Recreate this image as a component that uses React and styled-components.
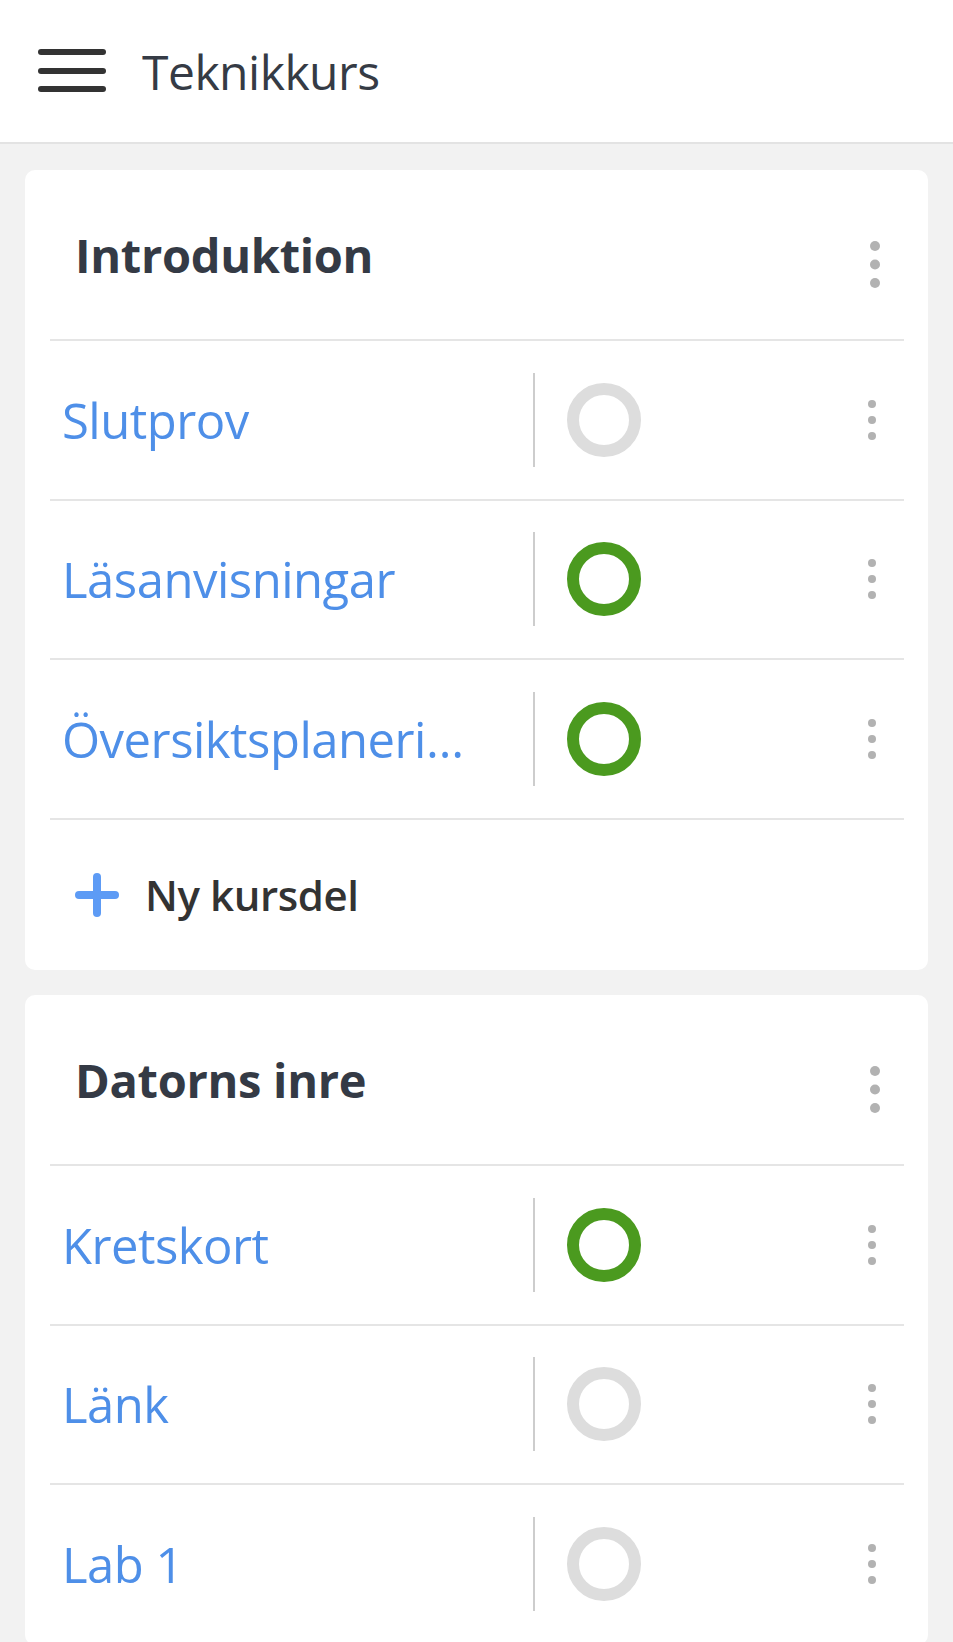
import React from "react";
import styled, { createGlobalStyle } from "styled-components";

const GlobalStyle = createGlobalStyle`
  html, body {
    margin: 0;
    padding: 0;
    background: #f2f2f2;
    font-family: "Open Sans", "Noto Sans", "Liberation Sans", sans-serif;
  }
  * { box-sizing: border-box; }
`;

const TopBar = styled.header`
  height: 144px;
  background: #ffffff;
  border-bottom: 2px solid #e3e3e3;
  display: flex;
  align-items: center;
  padding-left: 37px;
  gap: 35px;
`;

const MenuButton = styled.button`
  border: 0;
  background: none;
  padding: 0;
  display: flex;
  color: #333333;
`;

const Title = styled.h1`
  margin: 0;
  font-size: 48px;
  font-weight: 400;
  color: #353b45;
  letter-spacing: -0.5px;
`;

const Main = styled.main`
  padding: 26px 25px 0;
  display: flex;
  flex-direction: column;
  gap: 25px;
`;

const Card = styled.section`
  background: #ffffff;
  border-radius: 10px;
  padding: 0 24px 0 25px;
`;

const CardHeader = styled.div`
  height: 171px;
  border-bottom: 2px solid #e5e5e5;
  display: flex;
  align-items: center;
  justify-content: space-between;
  padding: 0 24px 0 25px;
`;

const Heading = styled.h2`
  margin: 0;
  font-size: 47px;
  font-weight: 700;
  color: #343a45;
  letter-spacing: -0.3px;
`;

const Row = styled.div`
  height: 159.5px;
  border-bottom: 2px solid #e5e5e5;
  display: grid;
  grid-template-columns: 483px 2px 1fr auto;
  align-items: center;
  padding-right: 28px;
`;

const ItemLink = styled.a`
  padding-left: 12px;
  padding-right: 60px;
  font-size: 49px;
  color: #4e8fe8;
  text-decoration: none;
  white-space: nowrap;
  overflow: hidden;
  text-overflow: ellipsis;
  letter-spacing: -0.5px;
`;

const Separator = styled.div`
  width: 2px;
  height: 94px;
  background: #cdcdcd;
`;

const StatusCell = styled.div`
  padding-left: 32px;
  display: flex;
  align-items: center;
`;

const StatusRing = styled.div`
  width: 74px;
  height: 74px;
  border-radius: 50%;
  border: 12px solid ${(p) => (p.$done ? "#4b9a1f" : "#dddddd")};
`;

const KebabButton = styled.button`
  border: 0;
  background: none;
  padding: 0;
  display: flex;
  color: #b2b2b2;
  margin-top: ${(p) => (p.$big ? "19px" : "0")};
`;

const AddRow = styled.div`
  height: 150.5px;
  display: flex;
  align-items: center;
  padding-left: 25px;
  gap: 26px;
`;

const AddLabel = styled.span`
  font-size: 42px;
  font-weight: 600;
  color: #333333;
  letter-spacing: -0.4px;
`;

function Kebab({ big }) {
  const r = big ? 5 : 4;
  const step = big ? 18.5 : 16;
  const h = step * 2 + r * 2;
  return (
    <KebabButton $big={big} aria-label="Mer">
      <svg width={r * 2} height={h} viewBox={`0 0 ${r * 2} ${h}`}>
        {[0, 1, 2].map((i) => (
          <circle key={i} cx={r} cy={r + i * step} r={r} fill="currentColor" />
        ))}
      </svg>
    </KebabButton>
  );
}

function MenuIcon() {
  return (
    <svg width="70" height="46" viewBox="0 0 70 46">
      <g stroke="currentColor" strokeWidth="6" strokeLinecap="round">
        <line x1="4" y1="4" x2="66" y2="4" />
        <line x1="4" y1="23" x2="66" y2="23" />
        <line x1="4" y1="41" x2="66" y2="41" />
      </g>
    </svg>
  );
}

function PlusIcon() {
  return (
    <svg width="44" height="44" viewBox="0 0 44 44">
      <g stroke="#5d9bf5" strokeWidth="8" strokeLinecap="round">
        <line x1="22" y1="4" x2="22" y2="40" />
        <line x1="4" y1="22" x2="40" y2="22" />
      </g>
    </svg>
  );
}

const sections = [
  {
    title: "Introduktion",
    items: [
      { name: "Slutprov", done: false },
      { name: "Läsanvisningar", done: true },
      { name: "Översiktsplanering", done: true },
    ],
    add: true,
  },
  {
    title: "Datorns inre",
    items: [
      { name: "Kretskort", done: true },
      { name: "Länk", done: false },
      { name: "Lab 1", done: false },
    ],
    add: false,
  },
];

export default function App() {
  return (
    <>
      <GlobalStyle />
      <TopBar>
        <MenuButton aria-label="Meny">
          <MenuIcon />
        </MenuButton>
        <Title>Teknikkurs</Title>
      </TopBar>
      <Main>
        {sections.map((s) => (
          <Card key={s.title}>
            <CardHeader>
              <Heading>{s.title}</Heading>
              <Kebab big />
            </CardHeader>
            {s.items.map((it) => (
              <Row key={it.name}>
                <ItemLink href="#">{it.name}</ItemLink>
                <Separator />
                <StatusCell>
                  <StatusRing $done={it.done} />
                </StatusCell>
                <Kebab />
              </Row>
            ))}
            {s.add && (
              <AddRow>
                <PlusIcon />
                <AddLabel>Ny kursdel</AddLabel>
              </AddRow>
            )}
          </Card>
        ))}
      </Main>
    </>
  );
}
